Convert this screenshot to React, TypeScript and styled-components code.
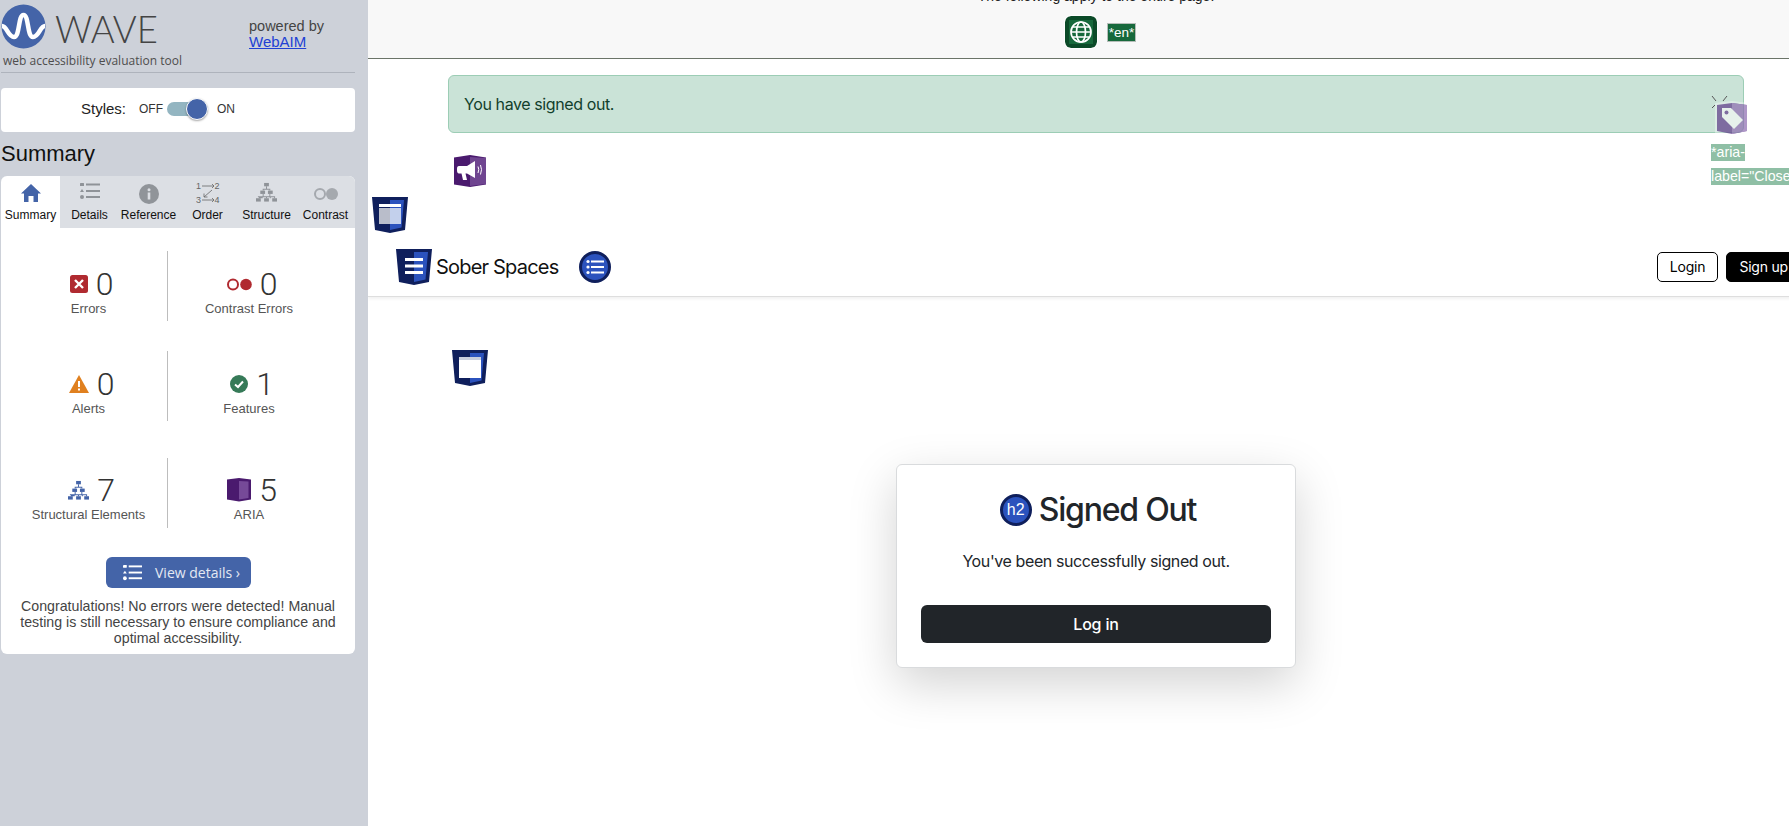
import { ReactElement, ReactNode } from 'react'
import styled, { createGlobalStyle } from 'styled-components'

const BLUE = '#4464a8'
const NAVY = '#0f1f5c'
const ROYAL = '#2b52bd'
const PURPLE = '#4a1a6e'
const SANS = '"Liberation Sans", Arial, sans-serif'
const PAGE_FONT = 'Inter, "Liberation Sans", sans-serif'

const GlobalStyle = createGlobalStyle`
  html, body {
    margin: 0;
    padding: 0;
    height: 100%;
    overflow: hidden;
    background: #fff;
  }
  * {
    box-sizing: border-box;
  }
`

const Shell = styled.div`
  display: flex;
  width: 1789px;
  height: 826px;
  overflow: hidden;
`

const Sidebar = styled.aside`
  flex: 0 0 368px;
  height: 100%;
  padding: 0 13px 0 1px;
  background: #cdd1d9;
  font-family: ${SANS};
  overflow: hidden;
`

const Brand = styled.header`
  position: relative;
  display: flex;
  height: 73px;
  border-bottom: 1px solid #aeb3bc;
`

const LogoMark = styled.svg`
  flex: none;
  width: 45px;
  height: 45px;
  margin-top: 4px;
`

const LogoWord = styled.div`
  margin: 5px 0 0 9px;
  width: 194px;
  font-family: Lato, ${SANS};
  font-weight: 300;
  font-size: 36.5px;
  line-height: 48px;
  color: #444;
`

const Tagline = styled.div`
  position: absolute;
  left: 2px;
  top: 52px;
  font-family: "Open Sans", ${SANS};
  font-size: 12px;
  line-height: 17px;
  color: #4d4d4d;
`

const Powered = styled.div`
  margin-top: 18px;
  font-size: 14.5px;
  line-height: 16px;
  color: #444;

  a {
    display: block;
    font-size: 15px;
    color: #2141d4;
    text-decoration: underline;
  }
`

const StylesCard = styled.div`
  display: flex;
  align-items: center;
  height: 44px;
  margin-top: 15px;
  padding: 0 0 2px 80px;
  background: #fff;
  border-radius: 4px;
  color: #222;
`

const StylesLabel = styled.span`
  margin: 0 13px 1px 0;
  font-size: 15px;
`

const StateLabel = styled.span`
  font-size: 12px;
  color: #333;
`

const Toggle = styled.span`
  position: relative;
  width: 41px;
  height: 14px;
  margin: 0 9px 0 4px;
  background: #93b5c1;
  border-radius: 7px;
`

const Knob = styled.span`
  position: absolute;
  right: 0;
  top: -4px;
  width: 22px;
  height: 22px;
  background: ${BLUE};
  border: 1px solid #fff;
  border-radius: 50%;
  box-shadow: 0 1px 2px rgba(0, 0, 0, 0.35);
`

const PanelTitle = styled.h2`
  margin: 9px 0 9px;
  font-size: 22px;
  line-height: 26px;
  font-weight: 400;
  color: #111;
`

const Panel = styled.section`
  height: 478px;
  background: #fff;
  border-radius: 6px;
  overflow: hidden;
`

const TabStrip = styled.nav`
  display: grid;
  grid-template-columns: repeat(6, 1fr);
  height: 52px;
  background: #dcdfe4;
`

const Tab = styled.div<{ $active?: boolean }>`
  display: flex;
  flex-direction: column;
  align-items: center;
  justify-content: space-between;
  height: 52px;
  padding: 6px 0 6px;
  font-size: 12px;
  line-height: 14px;
  color: #111;
  background: ${({ $active }) => ($active ? '#fff' : 'transparent')};
  border-radius: ${({ $active }) => ($active ? '6px 0 0 0' : '0')};
`

const TabIcon = styled.svg`
  width: 24px;
  height: 24px;
`

const StatGrid = styled.div`
  display: grid;
  grid-template-columns: 158px 162px;
  grid-template-rows: 70px 70px 70px;
  row-gap: 30px;
  margin: 23px 0 0 9px;
`

const Stat = styled.div<{ $left?: boolean; $lower?: boolean }>`
  display: flex;
  flex-direction: column;
  align-items: center;
  height: 70px;
  padding-top: ${({ $lower }) => ($lower ? '17px' : '18px')};
  margin-top: ${({ $lower }) => ($lower ? '7px' : '0')};
  border-right: ${({ $left }) => ($left ? '1px solid #bdbdbd' : 'none')};
`

const StatTop = styled.div`
  display: flex;
  align-items: center;
  gap: 8px;
  height: 30px;
  padding-left: 6px;
`

const StatNumber = styled.span`
  font-family: Roboto, ${SANS};
  font-size: 32px;
  line-height: 30px;
  font-weight: 300;
  color: #333;
`

const StatLabel = styled.span`
  margin-top: 2px;
  font-size: 13px;
  line-height: 16px;
  color: #555;
`

const ViewDetails = styled.button`
  display: flex;
  align-items: center;
  gap: 13px;
  width: 145px;
  height: 31px;
  margin: 36px 0 0 105px;
  padding: 0 0 0 17px;
  border: 0;
  border-radius: 6px;
  background: ${BLUE};
  font-family: "Open Sans", ${SANS};
  font-size: 14px;
  color: #e4e9f3;
`

const Congrats = styled.p`
  margin: 10px 0 0;
  padding: 0 14px;
  font-size: 14.2px;
  line-height: 16px;
  text-align: center;
  color: #444;
`

const Main = styled.main`
  flex: 1;
  min-width: 0;
  height: 100%;
  overflow: hidden;
  font-family: ${PAGE_FONT};
  color: #212529;
`

const Page = styled.div`
  width: 1456px;
`

const TopBar = styled.div`
  display: flow-root;
  height: 59px;
  background: #f8f8f8;
  border-bottom: 1px solid #6b7468;
  font-family: ${SANS};
`

const TopNote = styled.div`
  margin-top: -12px;
  font-size: 14px;
  line-height: 16px;
  text-align: center;
  color: #222;
`

const TopIcons = styled.div`
  display: flex;
  justify-content: center;
  align-items: center;
  gap: 10px;
  margin-top: 12px;
  padding-left: 9px;
`

const GlobeBadge = styled.svg`
  width: 32px;
  height: 32px;
  border-radius: 6px;
  outline: 1px solid #fff;
`

const Tag = styled.span<{ $bg: string }>`
  display: inline-block;
  background: ${({ $bg }) => $bg};
  color: #fff;
  font-family: ${SANS};
  font-size: 14.2px;
  line-height: 17px;
  white-space: nowrap;
`

const LangTag = styled(Tag)`
  border: 1px solid #b5bdb8;
  padding: 0 1px;
  font-size: 13.5px;
`

const Alert = styled.div`
  position: relative;
  width: 1296px;
  height: 58px;
  margin: 16px 0 0 80px;
  padding: 16px 15px;
  background: #cae3d7;
  border: 1px solid #9ccdb5;
  border-radius: 6px;
  font-size: 16px;
  line-height: 24px;
  letter-spacing: -0.4px;
  color: #123f2c;
`

const AlertTagIcon = styled.svg`
  position: absolute;
  left: 1262px;
  top: 18px;
  width: 40px;
  height: 46px;
`

const AriaTags = styled.div`
  position: absolute;
  left: 1262px;
  top: 68px;
  display: flex;
  flex-direction: column;
  align-items: flex-start;
  gap: 7px;
  letter-spacing: 0;
`

const ShieldBlock = styled.svg<{ $left: number; $top: number }>`
  display: block;
  width: 36px;
  height: 36px;
  margin-left: ${({ $left }) => $left}px;
  margin-top: ${({ $top }) => $top}px;
`

const RoleIcon = styled.svg`
  display: block;
  width: 32px;
  height: 32px;
  margin: 22px 0 0 86px;
`

const Navbar = styled.nav`
  display: flex;
  align-items: center;
  height: 61px;
  margin-top: 3px;
  padding: 1px 23px 0 28px;
  background: #fff;
  border-bottom: 1px solid #dedede;
  box-shadow: 0 2px 3px rgba(0, 0, 0, 0.06);
`

const NavShield = styled.svg`
  flex: none;
  width: 36px;
  height: 36px;
`

const NavBrand = styled.span`
  margin: 0 21px 0 4px;
  font-size: 20px;
  line-height: 24px;
  letter-spacing: -0.8px;
  color: #111;
`

const NavCircle = styled.svg`
  flex: none;
  width: 32px;
  height: 32px;
`

const NavActions = styled.div`
  display: flex;
  gap: 8px;
  margin-left: auto;
`

const NavButton = styled.button<{ $solid?: boolean }>`
  height: 30px;
  padding: 0 12px;
  border: 1px solid #000;
  border-radius: 5px;
  background: ${({ $solid }) => ($solid ? '#000' : '#fff')};
  color: ${({ $solid }) => ($solid ? '#fff' : '#000')};
  font-family: ${PAGE_FONT};
  font-size: 14px;
  letter-spacing: -0.2px;
`

const Card = styled.section`
  width: 400px;
  height: 204px;
  margin: 78px 0 0 528px;
  padding: 29px 24px 0;
  background: #fff;
  border: 1px solid #d9dbdd;
  border-radius: 6px;
  box-shadow: 0 16px 48px rgba(0, 0, 0, 0.175);
  text-align: center;
`

const CardTitle = styled.h2`
  display: flex;
  align-items: center;
  justify-content: center;
  gap: 7px;
  margin: 0;
  padding-left: 4px;
  font-size: 32px;
  line-height: 32px;
  font-weight: 500;
  letter-spacing: -1.2px;
  color: #212529;
`

const HeadingBadge = styled.span`
  display: inline-flex;
  align-items: center;
  justify-content: center;
  width: 32px;
  height: 32px;
  background: ${ROYAL};
  border: 3px solid ${NAVY};
  border-radius: 50%;
  color: #fff;
  font-family: ${SANS};
  font-size: 16px;
  font-weight: 400;
  letter-spacing: 0;
`

const CardText = styled.p`
  margin: 23px 0 0;
  font-size: 16px;
  line-height: 24px;
  letter-spacing: -0.4px;
`

const CardButton = styled.button`
  display: block;
  width: 350px;
  height: 38px;
  margin-top: 32px;
  border: 0;
  border-radius: 6px;
  background: #212529;
  color: #fff;
  font-family: ${PAGE_FONT};
  font-size: 16px;
  font-weight: 500;
  letter-spacing: -0.2px;
`

const ListGlyph = ({ color, width = 24 }: { color: string; width?: number }): ReactElement => (
  <svg width={width} height={(width * 18) / 20} viewBox="0 0 20 18" fill={color}>
    <rect x="0" y="1" width="4" height="3" rx="0.5" />
    <path d="M2 7 L4 10 H0 Z" />
    <circle cx="2" cy="15" r="2" />
    <rect x="6" y="1.5" width="14" height="2" />
    <rect x="6" y="8" width="14" height="2" />
    <rect x="6" y="14" width="14" height="2" />
  </svg>
)

const TreeGlyph = ({ color, size }: { color: string; size: number }): ReactElement => (
  <svg width={size} height={size} viewBox="0 0 22 20" fill={color}>
    <rect x="8.5" y="0" width="5" height="3.5" />
    <rect x="4.5" y="8" width="5" height="3.5" />
    <rect x="12.5" y="8" width="5" height="3.5" />
    <rect x="0" y="16" width="5" height="3.5" />
    <rect x="8.5" y="16" width="5" height="3.5" />
    <rect x="17" y="16" width="5" height="3.5" />
    <path d="M10.5 3.5h1V6H15v2h-1V7H8v1H7V6h3.5zM2 14h5v-2.5h1V14h6v-2.5h1V14h5v2h-1v-1h-3.5v1h-1v-1H11.5v1h-1v-1H7v1H3v-1H2z" />
  </svg>
)

const Shield = ({ children }: { children: ReactNode }): ReactElement => (
  <>
    <path d="M0 0H36L33 33L18 36L3 33Z" fill={NAVY} />
    <path d="M18 3H32L29.5 30.5L18 33Z" fill={ROYAL} />
    {children}
  </>
)

const tabs: { label: string; icon: ReactNode }[] = [
  {
    label: 'Summary',
    icon: (
      <TabIcon viewBox="0 1 24 24">
        <path d="M12 3 L22 12.5 H19 V21 H14.5 V15 H9.5 V21 H5 V12.5 H2 Z" fill={BLUE} />
      </TabIcon>
    ),
  },
  { label: 'Details', icon: <ListGlyph color="#8f9398" width={20} /> },
  {
    label: 'Reference',
    icon: (
      <TabIcon viewBox="0 0 24 24">
        <circle cx="12" cy="12" r="10" fill="#909499" />
        <rect x="10.7" y="10.5" width="2.6" height="7" fill="#dcdfe4" />
        <circle cx="12" cy="7.8" r="1.5" fill="#dcdfe4" />
      </TabIcon>
    ),
  },
  {
    label: 'Order',
    icon: (
      <TabIcon viewBox="0 0 24 24">
        <text x="0" y="7" fontSize="9" fill="#666" fontFamily={SANS}>1</text>
        <text x="18.5" y="7" fontSize="9" fill="#666" fontFamily={SANS}>2</text>
        <text x="0" y="21" fontSize="9" fill="#666" fontFamily={SANS}>3</text>
        <text x="18.5" y="21" fontSize="9" fill="#666" fontFamily={SANS}>4</text>
        <path d="M6 4H18M16 2l2 2-2 2M6 18H18M16 16l2 2-2 2M16 8L8 15M8 11.5V15H11.5" stroke="#666" fill="none" strokeWidth="0.8" />
      </TabIcon>
    ),
  },
  { label: 'Structure', icon: <TreeGlyph color="#8f9398" size={21} /> },
  {
    label: 'Contrast',
    icon: (
      <svg width="26" height="24" viewBox="0 0 26 24">
        <circle cx="7" cy="12" r="5" fill="none" stroke="#a5a9ae" strokeWidth="2" />
        <circle cx="19" cy="12" r="6" fill="#a5a9ae" />
      </svg>
    ),
  },
]

const App = (): ReactElement => (
  <>
    <GlobalStyle />
    <Shell>
      <Sidebar>
        <Brand>
          <LogoMark viewBox="0 0 45 45">
            <circle cx="22.5" cy="22.5" r="22" fill={BLUE} />
            <path
              d="M1 22 C6 22 7 33 13 33 C19 33 17 11 22.5 11 C28 11 26 33 32 33 C38 33 39 22 44 22"
              fill="none"
              stroke="#fff"
              strokeWidth="4.5"
            />
          </LogoMark>
          <LogoWord>WAVE</LogoWord>
          <Powered>
            powered by
            <a href="#webaim">WebAIM</a>
          </Powered>
          <Tagline>web accessibility evaluation tool</Tagline>
        </Brand>

        <StylesCard>
          <StylesLabel>Styles:</StylesLabel>
          <StateLabel>OFF</StateLabel>
          <Toggle>
            <Knob />
          </Toggle>
          <StateLabel>ON</StateLabel>
        </StylesCard>

        <PanelTitle>Summary</PanelTitle>

        <Panel>
          <TabStrip>
            {tabs.map((tab, i) => (
              <Tab key={tab.label} $active={i === 0}>
                {tab.icon}
                <span>{tab.label}</span>
              </Tab>
            ))}
          </TabStrip>

          <StatGrid>
            <Stat $left>
              <StatTop>
                <svg width="18" height="18" viewBox="0 0 18 18">
                  <rect width="18" height="18" rx="2.5" fill="#b02a30" />
                  <path d="M5 5L13 13M13 5L5 13" stroke="#fff" strokeWidth="2.4" />
                </svg>
                <StatNumber>0</StatNumber>
              </StatTop>
              <StatLabel>Errors</StatLabel>
            </Stat>
            <Stat>
              <StatTop>
                <svg width="25" height="13" viewBox="0 0 25 13">
                  <circle cx="6" cy="6.5" r="5" fill="none" stroke="#b02a30" strokeWidth="2" />
                  <circle cx="19" cy="6.5" r="5.8" fill="#b02a30" />
                </svg>
                <StatNumber>0</StatNumber>
              </StatTop>
              <StatLabel>Contrast Errors</StatLabel>
            </Stat>
            <Stat $left>
              <StatTop>
                <svg width="20" height="18" viewBox="0 0 20 18">
                  <path d="M10 0L20 18H0Z" fill="#e0801f" />
                  <rect x="9" y="6" width="2" height="6" fill="#fff" />
                  <rect x="9" y="13.5" width="2" height="2" fill="#fff" />
                </svg>
                <StatNumber>0</StatNumber>
              </StatTop>
              <StatLabel>Alerts</StatLabel>
            </Stat>
            <Stat>
              <StatTop>
                <svg width="18" height="18" viewBox="0 0 18 18">
                  <circle cx="9" cy="9" r="9" fill="#367a58" />
                  <path d="M5 9.5L8 12L13 6.5" fill="none" stroke="#fff" strokeWidth="2" />
                </svg>
                <StatNumber>1</StatNumber>
              </StatTop>
              <StatLabel>Features</StatLabel>
            </Stat>
            <Stat $left $lower>
              <StatTop>
                <TreeGlyph color={BLUE} size={21} />
                <StatNumber>7</StatNumber>
              </StatTop>
              <StatLabel>Structural Elements</StatLabel>
            </Stat>
            <Stat $lower>
              <StatTop>
                <svg width="24" height="24" viewBox="0 0 24 24">
                  <path d="M0 1.5L12 0L24 1.5V21.5L12 23.5L0 21.5Z" fill={PURPLE} />
                  <path d="M12 3L21.5 3.5V20L12 21.5Z" fill="#764a98" />
                </svg>
                <StatNumber>5</StatNumber>
              </StatTop>
              <StatLabel>ARIA</StatLabel>
            </Stat>
          </StatGrid>

          <ViewDetails>
            <ListGlyph color="#fff" width={19} />
            View details ›
          </ViewDetails>
          <Congrats>
            Congratulations! No errors were detected! Manual testing is still necessary to ensure
            compliance and optimal accessibility.
          </Congrats>
        </Panel>
      </Sidebar>

      <Main>
        <Page>
          <TopBar>
            <TopNote>The following apply to the entire page:</TopNote>
            <TopIcons>
              <GlobeBadge viewBox="0 0 32 32">
                <rect width="32" height="32" fill="#0b4a28" />
                <rect x="4" y="4" width="24" height="24" fill="#17693c" />
                <g fill="none" stroke="#fff" strokeWidth="1.7">
                  <circle cx="16" cy="16" r="10" />
                  <ellipse cx="16" cy="16" rx="4.5" ry="10" />
                  <path d="M6 16H26M7.5 11H24.5M7.5 21H24.5" />
                </g>
              </GlobeBadge>
              <LangTag $bg="#17693c">*en*</LangTag>
            </TopIcons>
          </TopBar>

          <Alert>
            You have signed out.
            <AlertTagIcon viewBox="0 0 40 46">
              <path d="M1 2L5 7M16 2L12 7M1 14L4 11" stroke="#555" strokeWidth="1" fill="none" />
              <g opacity="0.7" transform="translate(1 3)">
                <path d="M3 6L20 4L37 6V36L20 39L3 36Z" fill="#fff" opacity="0.5" />
                <path d="M5 8L20 6L35 8V34L20 37L5 34Z" fill="#5f3b8a" />
                <path d="M20 6L35 8V34L20 37Z" fill="#8d6bb0" />
                <path d="M10 11H19L31 23L22 32L10 20Z" fill="#f2f8f4" />
                <circle cx="14.5" cy="15.5" r="2" fill="#5f3b8a" />
              </g>
            </AlertTagIcon>
            <AriaTags>
              <Tag $bg="#8fbfa5">*aria-</Tag>
              <Tag $bg="#8fbfa5">label="Close</Tag>
            </AriaTags>
          </Alert>

          <RoleIcon viewBox="0 0 32 32">
            <path d="M0 2.5L16 0L32 2.5V29.5L16 32L0 29.5Z" fill={PURPLE} />
            <path d="M16 2L32 3V29L16 31Z" fill="#6f4590" />
            <path
              d="M5 11H13L21 6V23L13 18.5H11.5L13 25H9L7.5 18.5H5C3.5 18.5 3 17 3 15V14C3 12 3.5 11 5 11Z"
              fill="#fff"
            />
            <path d="M24 11.5Q25.5 14.5 24 18M26.5 10Q28.5 14.5 26.5 19.5" stroke="#fff" strokeWidth="1" fill="none" />
          </RoleIcon>

          <ShieldBlock viewBox="0 0 36 36" $left={4} $top={10}>
            <Shield>
              <rect x="7" y="7" width="22" height="3" fill="#fff" />
              <rect x="7" y="11" width="11" height="16" fill="#b9bdca" />
              <rect x="18" y="11" width="11" height="16" fill="#c3d0ec" />
            </Shield>
          </ShieldBlock>

          <Navbar>
            <NavShield viewBox="0 0 36 36">
              <Shield>
                <rect x="9" y="9" width="18" height="3" fill="#fff" />
                <rect x="9" y="15.5" width="18" height="3" fill="#fff" />
                <rect x="9" y="22" width="18" height="3" fill="#fff" />
              </Shield>
            </NavShield>
            <NavBrand>Sober Spaces</NavBrand>
            <NavCircle viewBox="0 0 32 32">
              <circle cx="16" cy="16" r="14.5" fill={ROYAL} stroke={NAVY} strokeWidth="3" />
              <circle cx="9" cy="10.5" r="1.6" fill="#fff" />
              <circle cx="9" cy="16" r="1.6" fill="#fff" />
              <circle cx="9" cy="21.5" r="1.6" fill="#fff" />
              <rect x="12" y="9.5" width="13" height="2" fill="#fff" />
              <rect x="12" y="15" width="13" height="2" fill="#fff" />
              <rect x="12" y="20.5" width="13" height="2" fill="#fff" />
            </NavCircle>
            <NavActions>
              <NavButton>Login</NavButton>
              <NavButton $solid>Sign up</NavButton>
            </NavActions>
          </Navbar>

          <ShieldBlock viewBox="0 0 36 36" $left={84} $top={53}>
            <Shield>
              <rect x="7" y="7" width="22" height="3" fill="#c9cede" />
              <rect x="7" y="10" width="22" height="18" fill="#fff" />
            </Shield>
          </ShieldBlock>

          <Card>
            <CardTitle>
              <HeadingBadge>h2</HeadingBadge>
              Signed Out
            </CardTitle>
            <CardText>You've been successfully signed out.</CardText>
            <CardButton>Log in</CardButton>
          </Card>
        </Page>
      </Main>
    </Shell>
  </>
)

export default App
